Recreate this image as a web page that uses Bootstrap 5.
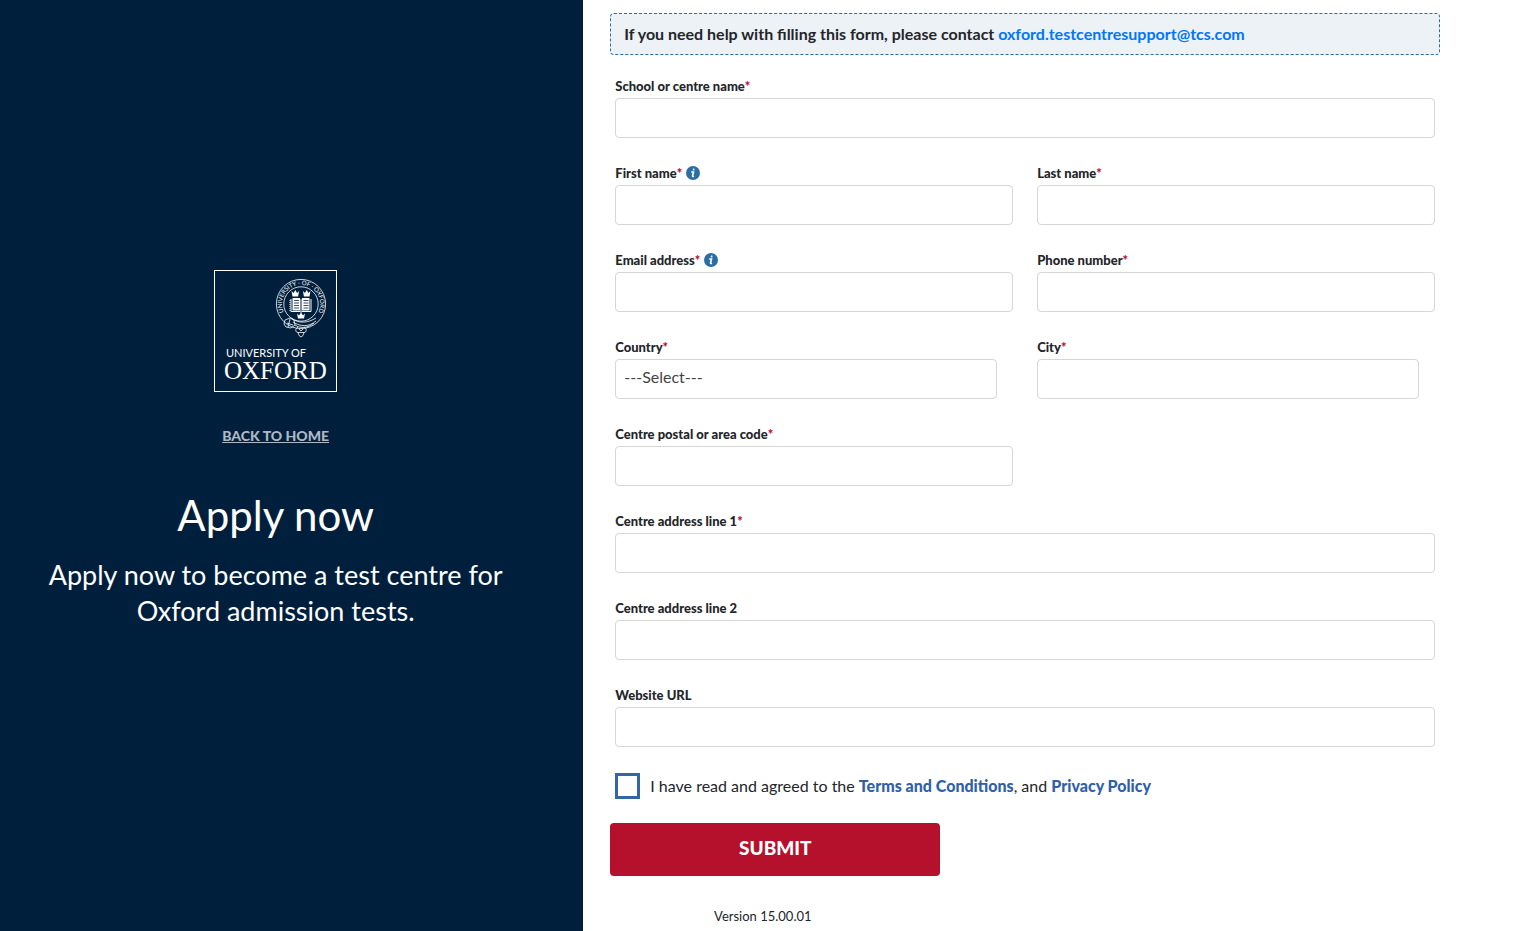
<!DOCTYPE html>
<html lang="en">
<head>
<meta charset="utf-8">
<meta name="viewport" content="width=device-width, initial-scale=1">
<title>Apply now - Oxford test centres</title>
<link href="https://cdn.jsdelivr.net/npm/bootstrap@5.3.0/dist/css/bootstrap.min.css" rel="stylesheet">
<style>
  body { font-family: Lato, "Noto Sans", sans-serif; font-size: 16px; color: #232529; background: #fff; }
  .intro-panel { flex: 0 0 38%; background: #001f3d; color: #fff; padding: 0 32px 33px 0; }
  .logo-box { width: 123px; height: 122px; margin-bottom: 34px; }
  .home-link { color: #b0b9c3; font-size: 14px; line-height: 20px; font-weight: 900; }
  .home-link:hover { color: #fff; }
  .intro-title { font-size: 42px; line-height: 56px; font-weight: 400; margin: 41px 0 14px; }
  .intro-text { font-size: 27px; line-height: 36px; max-width: 480px; margin: 0; }
  .form-panel { padding: 13px 95px 0 27px; min-width: 0; }
  .help-box { border: 1px dashed #2a6ea5; border-radius: 4px; background: #edf2f7; padding: 10px 13px; line-height: 20px; font-size: 16px; font-weight: 700; }
  .help-box a { color: #0075ff; text-decoration: none; }
  .apply-fields { padding: 19px 5px 0; }
  .field-row { --bs-gutter-x: 24px; }
  .field-block { height: 87px; }
  .field-label { display: flex; align-items: center; height: 24px; font-size: 13px; font-weight: 900; line-height: 24px; }
  .req { color: #ba0c2f; }
  .info-dot { width: 14px; height: 14px; margin-left: 4px; }
  .field-box { height: 40px; border: 1px solid #d6d6d6; border-radius: 4px; padding: 0 8px 4px; font-size: 16px; color: #444; background: #fff; }
  .field-short { width: calc(100% - 16px); }
  select.field-box { appearance: none; }
  .agree-row { padding-top: 3px; }
  .agree-box.form-check-input { width: 25px; height: 26px; margin: 0; border: 3px solid #3465a4; border-radius: 0; flex: none; }
  .agree-text { font-size: 16px; line-height: 26px; padding-left: 10px; }
  .agree-text a { color: #3060a8; font-weight: 900; text-decoration: none; }
  .submit-btn { width: 330px; max-width: 100%; height: 53px; margin-top: 24px; padding: 0 0 2px; background: #b5112c; color: #fff; border: 0; border-radius: 4px; font-size: 19px; font-weight: 900; }
  .submit-btn:hover { background: #970e25; color: #fff; }
  .version { width: 305px; margin: 30px 0 0; text-align: center; font-size: 13px; line-height: 20px; }
</style>
</head>
<body>
<div class="d-flex min-vh-100">
  <aside class="intro-panel d-flex flex-column align-items-center justify-content-center text-center">
    <svg class="logo-box" viewBox="0 0 123 122" fill="none" stroke="#fff" role="img" aria-label="University of Oxford">
      <rect x=".5" y=".5" width="122" height="121"/>
      <!-- belt -->
      <circle cx="87" cy="34" r="24.6" stroke-width=".8"/>
      <circle cx="87" cy="34" r="17.2" stroke-width=".8"/>
      <path id="ring" d="M73.500 47.500A19.100 19.100 0 1 1 100.500 47.500" stroke="none"/>
      <text fill="#fff" stroke="none" font-family="Lato, sans-serif" font-size="6"><textPath href="#ring" startOffset="50%" text-anchor="middle">UNIVERSITY · OF · OXFORD</textPath></text>
      <!-- open book -->
      <path d="M77 29v12.500h9l1 1 1-1h9V29M87 29v13" stroke-width="1"/>
      <path d="M78.500 28h7.500v12.500h-7.500zM88 28h7.500v12.500H88z" fill="#fff" stroke="none"/>
      <path d="M80 30.500h5M80 33h5M80 35.500h5M80 38h5M89.500 30.500h5M89.500 33h5M89.500 35.500h5M89.500 38h5" stroke="#001f3d" stroke-width=".8"/>
      <path d="M76 30v11" stroke-dasharray="1 1"/>
      <!-- crowns -->
      <g fill="#fff" stroke="none">
        <path d="M77.500 21l2 2 1.800-3 1.800 3 2-2-1 5.500h-5.600zM88.900 21l2 2 1.800-3 1.800 3 2-2-1 5.500h-5.600zM83 43.500l2 2 2-3 2 3 2-2-1 5h-6z"/>
      </g>
      <!-- buckle, strap end and pendant -->
      <path d="M71 50l5-2 4 2 1 5-4 3-5-1-2-3zM73 53l6 2M76 49l-2 8" stroke-width=".8"/>
      <path d="M77 48c8 6 17 5 25 0M79 52c8 5 16 5 23-1M81 55c6 4 13 3 19-2" stroke-width=".8"/>
      <path d="M84 57c-3 2-3 5 0 5.500l1 3 2 1.500 2-1.500 1-3c3-.5 3-3.500 0-5.500M84 62.500h6M85 59l2 2 2-2" stroke-width=".8"/>
      <text x="12" y="87" fill="#fff" stroke="none" font-family="Lato, sans-serif" font-size="11">UNIVERSITY OF</text>
      <text x="10" y="109" fill="#fff" stroke="none" font-family="Liberation Serif, serif" font-size="25">OXFORD</text>
    </svg>
    <a class="home-link" href="#">BACK TO HOME</a>
    <h1 class="intro-title">Apply now</h1>
    <p class="intro-text">Apply now to become a test centre for Oxford admission tests.</p>
  </aside>

  <main class="form-panel flex-grow-1">
    <div class="help-box">If you need help with filling this form, please contact <a href="mailto:oxford.testcentresupport@tcs.com">oxford.testcentresupport@tcs.com</a></div>
    <form>
      <div class="apply-fields">
        <div class="row field-row">
          <div class="col-12 field-block">
            <label class="field-label" for="school">School or centre name<span class="req">*</span></label>
            <input class="field-box w-100" id="school" type="text">
          </div>
          <div class="col-6 field-block">
            <label class="field-label" for="first">First name<span class="req">*</span>
              <svg class="info-dot" viewBox="0 0 14 14" aria-hidden="true"><circle cx="7" cy="7" r="7" fill="#2a6ea5"/><path d="M5.200 6h2.300L6.500 10q0 .9 1.500.2M7.800 2.700l-.3 1.700" fill="none" stroke="#fff" stroke-width="1.600"/></svg>
            </label>
            <input class="field-box w-100" id="first" type="text">
          </div>
          <div class="col-6 field-block">
            <label class="field-label" for="last">Last name<span class="req">*</span></label>
            <input class="field-box w-100" id="last" type="text">
          </div>
          <div class="col-6 field-block">
            <label class="field-label" for="email">Email address<span class="req">*</span>
              <svg class="info-dot" viewBox="0 0 14 14" aria-hidden="true"><circle cx="7" cy="7" r="7" fill="#2a6ea5"/><path d="M5.200 6h2.300L6.500 10q0 .9 1.500.2M7.800 2.700l-.3 1.700" fill="none" stroke="#fff" stroke-width="1.600"/></svg>
            </label>
            <input class="field-box w-100" id="email" type="email">
          </div>
          <div class="col-6 field-block">
            <label class="field-label" for="phone">Phone number<span class="req">*</span></label>
            <input class="field-box w-100" id="phone" type="tel">
          </div>
          <div class="col-6 field-block">
            <label class="field-label" for="country">Country<span class="req">*</span></label>
            <select class="field-box field-short" id="country"><option>---Select---</option></select>
          </div>
          <div class="col-6 field-block">
            <label class="field-label" for="city">City<span class="req">*</span></label>
            <input class="field-box field-short" id="city" type="text">
          </div>
          <div class="col-6 field-block">
            <label class="field-label" for="postal">Centre postal or area code<span class="req">*</span></label>
            <input class="field-box w-100" id="postal" type="text">
          </div>
          <div class="col-12 field-block">
            <label class="field-label" for="address1">Centre address line 1<span class="req">*</span></label>
            <input class="field-box w-100" id="address1" type="text">
          </div>
          <div class="col-12 field-block">
            <label class="field-label" for="address2">Centre address line 2</label>
            <input class="field-box w-100" id="address2" type="text">
          </div>
          <div class="col-12 field-block">
            <label class="field-label" for="website">Website URL</label>
            <input class="field-box w-100" id="website" type="url">
          </div>
        </div>
        <div class="d-flex align-items-center agree-row">
          <input class="form-check-input agree-box" type="checkbox" id="agree">
          <label class="agree-text" for="agree">I have read and agreed to the <a href="#">Terms and Conditions</a>, and <a href="#">Privacy Policy</a></label>
        </div>
      </div>
      <button class="btn submit-btn" type="submit">SUBMIT</button>
    </form>
    <p class="version">Version 15.00.01</p>
  </main>
</div>
<script src="https://cdn.jsdelivr.net/npm/bootstrap@5.3.0/dist/js/bootstrap.bundle.min.js"></script>
</body>
</html>
